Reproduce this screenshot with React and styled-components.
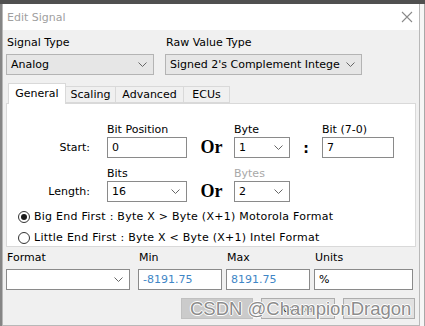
import React from "react";
import styled, { createGlobalStyle } from "styled-components";

const GlobalStyle = createGlobalStyle`
  body {
    margin: 0;
    background: #f0f0f0;
    font-family: "DejaVu Sans", Tahoma, sans-serif;
  }
`;

const Page = styled.div`
  width: 425px;
  height: 326px;
  display: flex;
  flex-direction: column;
  position: relative;
  overflow: hidden;
  background: #f0f0f0;
`;

const TopStrip = styled.div`
  height: 4px;
  background: #505050;
`;

const Frame = styled.div`
  flex: 1;
  display: flex;
`;

const LeftEdge = styled.div`
  width: 2px;
  background: #858585;
`;

const RightEdge = styled.div`
  width: 4px;
  background: #f6f6f6;
  border-right: 1px solid #a8a8a8;
`;

const Dialog = styled.div`
  flex: 1;
  display: flex;
  flex-direction: column;
  border: 1px solid #b8b8b8;
  border-top: none;
  background: #f0f0f0;
  font-size: 11px;
  color: #000;
`;

const TitleBar = styled.div`
  height: 26px;
  background: #fff;
  display: flex;
  align-items: center;
  justify-content: space-between;
  padding: 0 6px 0 4px;
  font-size: 11px;
  color: #a0a0a0;
`;

const Body = styled.div`
  padding: 6px 3px 0 3px;
  display: flex;
  flex-direction: column;
`;

const TopRow = styled.div`
  display: flex;
  gap: 11px;
`;

const Field = styled.div`
  display: flex;
  flex-direction: column;
  gap: 4px;
  margin-right: ${(p) => p.$mr || 0}px;
`;

const Label = styled.div`
  height: 14px;
  line-height: 14px;
  padding-left: ${(p) => p.$indent ?? 1}px;
  color: ${(p) => (p.$dim ? "#a8a8a8" : "#000")};
  white-space: nowrap;
`;

const SelectBox = styled.div`
  width: ${(p) => p.$w}px;
  height: 21px;
  box-sizing: border-box;
  display: flex;
  align-items: center;
  justify-content: space-between;
  padding: 0 6px 0 4px;
  background: ${(p) => (p.$white ? "#fff" : "#e6e6e6")};
  border: 1px solid ${(p) => (p.$white ? "#8a8a8a" : "#b4b4b4")};
  white-space: nowrap;
  overflow: hidden;
`;

const InputBox = styled.div`
  width: ${(p) => p.$w}px;
  height: 21px;
  box-sizing: border-box;
  display: flex;
  align-items: center;
  padding: 0 4px;
  background: #fff;
  border: 1px solid #8a8a8a;
  color: ${(p) => (p.$blue ? "#3f86c6" : "#000")};
`;

const Tabs = styled.div`
  display: flex;
  align-items: flex-end;
  margin: 8px 0 0 3px;
  height: 20px;
  position: relative;
  z-index: 1;
`;

const Tab = styled.div`
  box-sizing: border-box;
  width: ${(p) => p.$w}px;
  height: ${(p) => (p.$active ? 21 : 17)}px;
  margin-bottom: ${(p) => (p.$active ? -1 : 0)}px;
  display: flex;
  align-items: center;
  justify-content: center;
  background: ${(p) => (p.$active ? "#fff" : "#f0f0f0")};
  border: 1px solid #d9d9d9;
  border-bottom: ${(p) => (p.$active ? "none" : "1px solid #d9d9d9")};
  margin-left: -1px;
  padding-bottom: ${(p) => (p.$active ? 2 : 0)}px;
`;

const Panel = styled.div`
  height: 144px;
  box-sizing: border-box;
  background: #fff;
  border: 1px solid #d9d9d9;
  padding: 18px 0 0 0;
  display: flex;
  flex-direction: column;
`;

const PosGrid = styled.div`
  display: grid;
  grid-template-columns: 100px 80px 47px 56px 32px 72px;
  grid-template-rows: 15px 21px;
  margin-bottom: ${(p) => p.$mb || 0}px;
`;

const Cell = styled.div`
  grid-row: ${(p) => p.$row};
  grid-column: ${(p) => p.$col};
  display: flex;
  align-items: center;
  justify-content: ${(p) => p.$justify || "flex-start"};
`;

const RowLabel = styled(Cell)`
  justify-content: flex-end;
  padding-right: 17px;
`;

const Or = styled(Cell)`
  justify-content: center;
  font-family: "Liberation Serif", serif;
  font-weight: bold;
  font-size: 18px;
  padding-left: 2px;
`;

const Colon = styled(Cell)`
  justify-content: center;
  font-weight: bold;
  font-size: 14px;
`;

const Radios = styled.div`
  margin-top: 4px;
  padding-left: 11px;
  display: flex;
  flex-direction: column;
`;

const RadioRow = styled.div`
  height: 21px;
  display: flex;
  align-items: center;
  gap: 4px;
  white-space: nowrap;
  letter-spacing: 0.25px;
`;

const RadioDot = styled.span`
  width: 12px;
  height: 12px;
  box-sizing: border-box;
  border-radius: 50%;
  border: 1px solid #333;
  display: flex;
  align-items: center;
  justify-content: center;
  &::after {
    content: "";
    width: 6px;
    height: 6px;
    border-radius: 50%;
    background: ${(p) => (p.$on ? "#1a1a1a" : "transparent")};
  }
`;

const BottomRow = styled.div`
  display: flex;
  margin-top: 4px;
`;

const Buttons = styled.div`
  display: flex;
  justify-content: flex-end;
  gap: 8px;
  margin-top: 8px;
  padding-right: 1px;
`;

const Button = styled.div`
  width: ${(p) => p.$w}px;
  height: 21px;
  box-sizing: border-box;
  display: flex;
  align-items: center;
  justify-content: center;
  font-size: 9px;
  background: ${(p) => (p.$default ? "#cbcbcb" : "#e1e1e1")};
  border: 1px solid ${(p) => (p.$default ? "#c0c0c0" : "#adadad")};
`;

const Watermark = styled.div`
  position: absolute;
  left: 190px;
  top: 298px;
  font-family: "Liberation Sans", sans-serif;
  font-size: 18.5px;
  line-height: 22px;
  color: #8c8c8c;
  text-shadow: 1px 0 0 #fff, -1px 0 0 #fff, 0 1px 0 #fff, 0 -1px 0 #fff;
  white-space: nowrap;
`;

const Chevron = () => (
  <svg width="9" height="5" viewBox="0 0 9 5">
    <path d="M0.5 0.5 L4.5 4.5 L8.5 0.5" fill="none" stroke="#666" strokeWidth="1" />
  </svg>
);

const CloseIcon = () => (
  <svg width="12" height="12" viewBox="0 0 12 12">
    <path d="M1 1 L11 11 M11 1 L1 11" stroke="#8a8a8a" strokeWidth="1.1" />
  </svg>
);

function Select({ w, value, white }) {
  return (
    <SelectBox $w={w} $white={white}>
      <span>{value}</span>
      <Chevron />
    </SelectBox>
  );
}

export default function App() {
  return (
    <Page>
      <GlobalStyle />
      <TopStrip />
      <Frame>
        <LeftEdge />
        <Dialog>
          <TitleBar>
            <span>Edit Signal</span>
            <CloseIcon />
          </TitleBar>
          <Body>
            <TopRow>
              <Field>
                <Label>Signal Type</Label>
                <Select w={148} value="Analog" />
              </Field>
              <Field>
                <Label>Raw Value Type</Label>
                <Select w={197} value="Signed 2's Complement Intege" />
              </Field>
            </TopRow>

            <Tabs>
              <Tab $w={58} $active>General</Tab>
              <Tab $w={51}>Scaling</Tab>
              <Tab $w={69}>Advanced</Tab>
              <Tab $w={47}>ECUs</Tab>
            </Tabs>
            <Panel>
              <PosGrid $mb={8}>
                <Cell $row={1} $col={2}>Bit Position</Cell>
                <Cell $row={1} $col={4}>Byte</Cell>
                <Cell $row={1} $col={6}>Bit (7-0)</Cell>
                <RowLabel $row={2} $col={1}>Start:</RowLabel>
                <Cell $row={2} $col={2}><InputBox $w={80}>0</InputBox></Cell>
                <Or $row={2} $col={3}>Or</Or>
                <Cell $row={2} $col={4}><Select w={56} value="1" white /></Cell>
                <Colon $row={2} $col={5}>:</Colon>
                <Cell $row={2} $col={6}><InputBox $w={72}>7</InputBox></Cell>
              </PosGrid>
              <PosGrid>
                <Cell $row={1} $col={2}>Bits</Cell>
                <Cell $row={1} $col={4}><Label $indent={0} $dim>Bytes</Label></Cell>
                <RowLabel $row={2} $col={1}>Length:</RowLabel>
                <Cell $row={2} $col={2}><Select w={80} value="16" white /></Cell>
                <Or $row={2} $col={3}>Or</Or>
                <Cell $row={2} $col={4}><Select w={56} value="2" white /></Cell>
              </PosGrid>
              <Radios>
                <RadioRow>
                  <RadioDot $on />
                  Big End First : Byte X &gt; Byte (X+1) Motorola Format
                </RadioRow>
                <RadioRow>
                  <RadioDot />
                  Little End First : Byte X &lt; Byte (X+1) Intel Format
                </RadioRow>
              </Radios>
            </Panel>

            <BottomRow>
              <Field $mr={8}>
                <Label>Format</Label>
                <Select w={124} value="" white />
              </Field>
              <Field $mr={4}>
                <Label>Min</Label>
                <InputBox $w={84} $blue>-8191.75</InputBox>
              </Field>
              <Field $mr={4}>
                <Label>Max</Label>
                <InputBox $w={84} $blue>8191.75</InputBox>
              </Field>
              <Field>
                <Label>Units</Label>
                <InputBox $w={99}>%</InputBox>
              </Field>
            </BottomRow>

            <Buttons>
              <Button $w={72} $default />
              <Button $w={74}>Cancel</Button>
              <Button $w={72} />
            </Buttons>
          </Body>
        </Dialog>
        <RightEdge />
      </Frame>
      <Watermark>CSDN @ChampionDragon</Watermark>
    </Page>
  );
}
